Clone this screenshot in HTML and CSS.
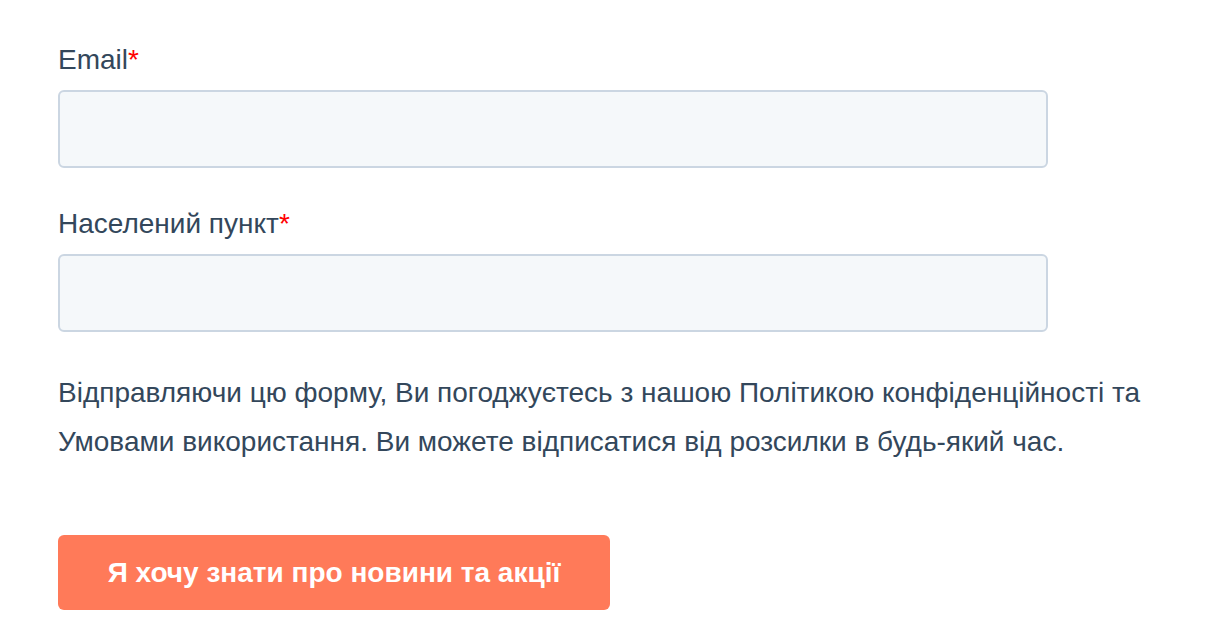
FILE: index.html
```html
<!DOCTYPE html>
<html lang="uk">
<head>
<meta charset="utf-8">
<link rel="stylesheet" href="styles.css">
</head>
<body>
<form class="form">
  <div class="fields">
    <div class="field">
      <label class="label">Email<span class="req">*</span></label>
      <div class="input"></div>
    </div>
    <div class="field">
      <label class="label">Населений пункт<span class="req">*</span></label>
      <div class="input"></div>
    </div>
  </div>
  <p class="legal">Відправляючи цю форму, Ви погоджуєтесь з нашою Політикою конфіденційності та Умовами використання. Ви можете відписатися від розсилки в будь-який час.</p>
  <div class="actions">
    <button type="button" class="btn">Я хочу знати про новини та акції</button>
  </div>
</form>
</body>
</html>
```
FILE: styles.css
```css
html, body {
  margin: 0;
  padding: 0;
  background: #ffffff;
}
body {
  font-family: "Liberation Sans", Arial, sans-serif;
  color: #33475b;
}
.form {
  padding: 42px 58px 0 58px;
  width: 1100px;
}
.fields {
  display: flex;
  flex-direction: column;
  gap: 38px;
}
.field {
  display: flex;
  flex-direction: column;
}
.label {
  font-size: 28px;
  line-height: 36px;
  margin-bottom: 12px;
}
.req {
  color: #ff0000;
}
.input {
  box-sizing: border-box;
  width: 990px;
  height: 78px;
  background: #f5f8fa;
  border: 2px solid #cbd6e2;
  border-radius: 6px;
}
.legal {
  margin: 36px 0 0 0;
  font-size: 28px;
  line-height: 49px;
}
.actions {
  margin-top: 69px;
}
.btn {
  box-sizing: border-box;
  width: 552px;
  height: 75px;
  background: #ff7a59;
  border: none;
  border-radius: 6px;
  color: #ffffff;
  font-family: "Liberation Sans", Arial, sans-serif;
  font-weight: bold;
  font-size: 28px;
  padding: 0;
}
```
